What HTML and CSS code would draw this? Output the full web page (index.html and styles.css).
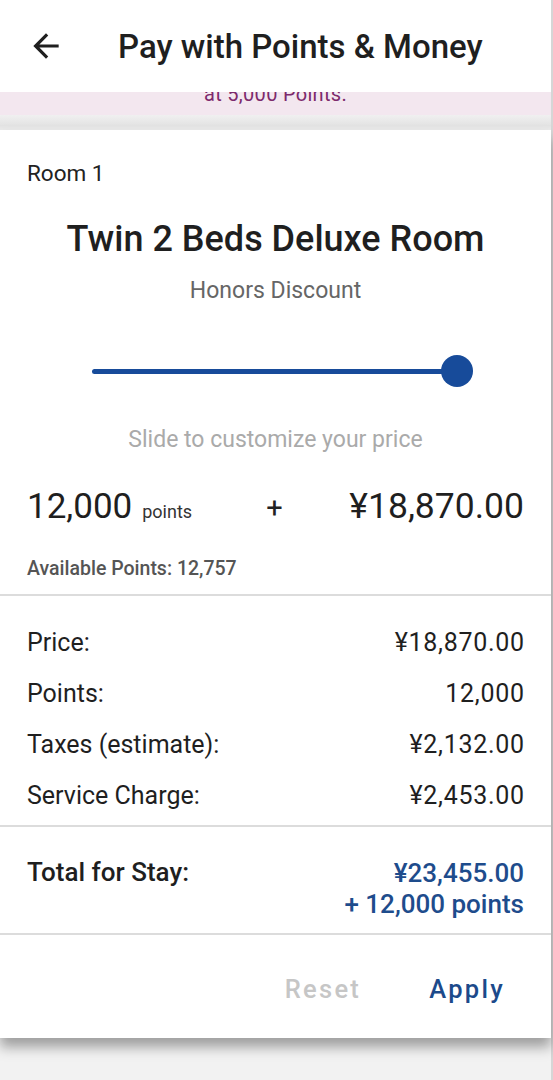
FILE: index.html
```html
<!DOCTYPE html>
<html lang="en">
<head>
<meta charset="utf-8">
<title>Pay with Points &amp; Money</title>
<link rel="stylesheet" href="styles.css">
</head>
<body>
<div class="screen">
  <header class="appbar">
    <svg class="back" viewBox="0 0 24 24" width="38" height="38" aria-hidden="true">
      <path d="M20 11H7.83l5.59-5.59L12 4l-8 8 8 8 1.41-1.41L7.83 13H20v-2z" fill="#1f1f1f"/>
    </svg>
    <h1 class="title">Pay with Points &amp; Money</h1>
  </header>
  <div class="banner"><p class="banner-text">at 5,000 Points.</p></div>
  <div class="gap-shadow"></div>
  <main class="card">
    <section class="top">
      <div class="room-label">Room 1</div>
      <div class="room-name">Twin 2 Beds Deluxe Room</div>
      <div class="rate-name">Honors Discount</div>
      <div class="slider">
        <div class="track"></div>
        <div class="thumb"></div>
      </div>
      <div class="hint">Slide to customize your price</div>
      <div class="amounts">
        <div class="pts"><span class="big">12,000</span><span class="unit">points</span></div>
        <div class="plus">+</div>
        <div class="money big">¥18,870.00</div>
      </div>
      <div class="avail">Available Points: 12,757</div>
    </section>
    <section class="breakdown">
      <div class="row"><span>Price:</span><span class="num">¥18,870.00</span></div>
      <div class="row"><span>Points:</span><span class="num">12,000</span></div>
      <div class="row"><span>Taxes (estimate):</span><span class="num">¥2,132.00</span></div>
      <div class="row"><span>Service Charge:</span><span class="num">¥2,453.00</span></div>
    </section>
    <section class="total">
      <div class="total-label">Total for Stay:</div>
      <div class="total-value">
        <div>¥23,455.00</div>
        <div>+ 12,000 points</div>
      </div>
    </section>
    <footer class="actions">
      <button class="btn btn-reset" type="button">Reset</button>
      <button class="btn btn-apply" type="button">Apply</button>
    </footer>
  </main>
</div>
</body>
</html>
```

FILE: styles.css
```css
* { box-sizing: border-box; }
html, body { margin: 0; padding: 0; }
body {
  background: #f2f2f2;
  font-family: Roboto, "Noto Sans", "Liberation Sans", sans-serif;
  color: #1f1f1f;
}
.screen {
  width: 553px;
  min-height: 1080px;
  background: #f2f2f2;
  border-right: 2px solid #d6d6d6;
}
.appbar {
  height: 92px;
  background: #fff;
  display: flex;
  align-items: center;
  padding-left: 27px;
}
.back { display: block; flex: none; }
.title {
  margin: 0 0 0 53px;
  font-size: 33px;
  font-weight: 500;
  color: #1f1f1f;
}
.banner {
  height: 23px;
  background: #f3e7ef;
  overflow: hidden;
  text-align: center;
}
.banner-text {
  margin: -10px 0 0;
  font-size: 20px;
  line-height: 24px;
  color: #7d2a6c;
  letter-spacing: 0.3px;
}
.gap-shadow {
  height: 15px;
  background: linear-gradient(#f0f0f0, #e3e3e3 70%, #ececec);
}
.card {
  background: #fff;
  box-shadow: 0 9px 12px rgba(0,0,0,0.35);
}
.top { padding: 31px 27px 14px; }
.room-label { font-size: 22.5px; line-height: 24px; color: #222; }
.room-name {
  margin-top: 34px;
  font-size: 36px;
  line-height: 40px;
  font-weight: 500;
  text-align: center;
  color: #1f1f1f;
}
.rate-name {
  margin-top: 20px;
  font-size: 23px;
  line-height: 24px;
  color: #666;
  text-align: center;
}
.slider {
  margin: 52px 0 0 65px;
  width: 381px;
  height: 32px;
  position: relative;
  display: flex;
  align-items: center;
}
.track {
  width: 365px;
  height: 5px;
  border-radius: 3px;
  background: #174b9a;
}
.thumb {
  position: absolute;
  right: 0;
  top: 0;
  width: 32px;
  height: 32px;
  border-radius: 50%;
  background: #174b9a;
}
.hint {
  margin-top: 41px;
  font-size: 23px;
  line-height: 24px;
  color: #aaa;
  text-align: center;
}
.amounts {
  margin-top: 34px;
  display: grid;
  grid-template-columns: 1fr auto 1fr;
  align-items: baseline;
  height: 40px;
  line-height: 40px;
}
.big { font-size: 35px; color: #1f1f1f; }
.money { font-size: 35.5px; text-align: right; }
.unit { font-size: 18px; margin-left: 10px; color: #333; }
.plus { font-size: 29px; color: #222; padding-right: 2px; }
.avail {
  margin-top: 32px;
  font-size: 19.5px;
  line-height: 22px;
  font-weight: 500;
  color: #555;
}
.breakdown {
  border-top: 2px solid #dcdcdc;
  padding: 21px 27px 4px;
}
.row {
  display: flex;
  justify-content: space-between;
  height: 51px;
  line-height: 51px;
  font-size: 25px;
  color: #1f1f1f;
}
.num { letter-spacing: 0.7px; margin-right: -0.7px; }
.total {
  border-top: 2px solid #dcdcdc;
  padding: 33px 27px 13px;
  display: flex;
  justify-content: space-between;
  align-items: flex-start;
  height: 108px;
}
.total-label { font-size: 26px; line-height: 25px; font-weight: 500; color: #1f1f1f; }
.total-value {
  text-align: right;
  font-size: 26px;
  line-height: 31px;
  font-weight: 500;
  color: #1e4c8c;
  margin-top: -2px;
}
.actions {
  border-top: 2px solid #dcdcdc;
  height: 105px;
  display: flex;
  justify-content: flex-end;
  align-items: center;
  gap: 24px;
  padding: 4px 24px 0 0;
}
.btn {
  background: none;
  border: 0;
  font-family: inherit;
  font-size: 25.5px;
  font-weight: 500;
  letter-spacing: 2.3px;
  padding: 12px 22px;
}
.btn-reset { color: #c6c6c6; }
.btn-apply { color: #1c4a8b; }
```
